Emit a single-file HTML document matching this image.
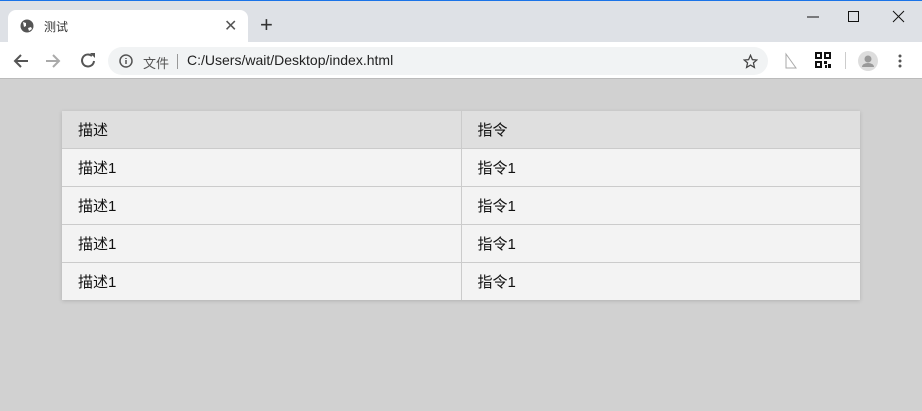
<!DOCTYPE html>
<html><head><meta charset="utf-8"><style>
*{margin:0;padding:0;box-sizing:border-box}
body{width:922px;height:411px;background:#d1d1d1;font-family:"Liberation Sans","Noto Sans CJK SC",sans-serif;position:relative;overflow:hidden}
.top{position:absolute;left:0;top:0;width:922px;height:42px;background:#dee1e6;border-top:1px solid #1a73e8}
.tab{position:absolute;left:8px;top:9px;width:240px;height:34px;background:#fff;border-radius:8px 8px 0 0}
.tab .t{position:absolute;left:36px;top:8px;font-size:12px;color:#333}
.tab .x{position:absolute;left:216px;top:6px;font-size:16px;color:#555}
.plus{position:absolute;left:260px;top:14px;font-size:22px;color:#333;line-height:20px}
.bar{position:absolute;left:0;top:42px;width:922px;height:37px;background:#fff;border-bottom:1px solid #bbb}
.omni{position:absolute;left:108px;top:5px;width:660px;height:28px;background:#f1f3f4;border-radius:14px}
.omni .i{position:absolute;left:35px;top:6px;font-size:13px;color:#555}
.omni .sep{position:absolute;left:69px;top:7px;width:1px;height:15px;background:#999}
.omni .u{position:absolute;left:79px;top:5px;font-size:14px;color:#222}
table{position:absolute;left:62px;top:111px;width:798px;border-collapse:collapse;box-shadow:0 1px 4px rgba(0,0,0,.15)}
td{height:38px;border:1px solid #cbcbcb;padding:0 0 0 16px;font-size:15px;color:#111;background:#f3f3f3;width:399px}
tr:first-child td{background:#dfdfdf;height:37px}
tr:first-child td{border-top:none}
td:first-child{border-left:none}td:last-child{border-right:none}
tr:last-child td{border-bottom:none}
</style></head><body>
<div class="top">
<div class="tab">
<svg style="position:absolute;left:12px;top:9px" width="14" height="14" viewBox="0 0 14 14"><circle cx="7" cy="7" r="6.5" fill="#555"/><path d="M3 3l3 1 0 3-2 1zM8 9l3-1 1 2-3 2z" fill="#fff"/></svg>
<span class="t">测试</span><span class="x">✕</span></div>
<div class="plus">+</div>
<svg style="position:absolute;left:807px;top:9px" width="100" height="14" viewBox="0 0 100 14"><path d="M0 7h12" stroke="#111"/><path d="M41.5 1.5h10v10h-10z" stroke="#111" fill="none"/><path d="M86 1l11 11M97 1L86 12" stroke="#111"/></svg>
</div>
<div class="bar">
<svg style="position:absolute;left:12px;top:10px" width="90" height="18" viewBox="0 0 90 18"><path d="M16 9H3M9 3L3 9l6 6" stroke="#555" stroke-width="2" fill="none"/><path d="M34 9h13M41 3l6 6-6 6" stroke="#aaa" stroke-width="2" fill="none"/><path d="M80 4a6 6 0 1 0 2 5" stroke="#555" stroke-width="2" fill="none"/><path d="M78 1h5v5z" fill="#555"/></svg>
<div class="omni">
<svg style="position:absolute;left:11px;top:7px" width="14" height="14" viewBox="0 0 14 14"><circle cx="7" cy="7" r="6" stroke="#555" stroke-width="1.5" fill="none"/><path d="M7 6v4M7 4v1" stroke="#555" stroke-width="1.5"/></svg>
<span class="i">文件</span><span class="sep"></span><span class="u">C:/Users/wait/Desktop/index.html</span>
<svg style="position:absolute;left:635px;top:7px" width="15" height="15" viewBox="0 0 24 24"><path d="M12 2l3 7 7 .6-5.3 4.6 1.6 7.3L12 17.8 5.7 21.5l1.6-7.3L2 9.6 9 9z" stroke="#444" stroke-width="2" fill="none"/></svg>
</div>
<svg style="position:absolute;left:784px;top:10px" width="18" height="18" viewBox="0 0 18 18"><path d="M2 2l10 14H2z" stroke="#aaa" fill="none"/></svg>
<svg style="position:absolute;left:815px;top:10px" width="16" height="16" viewBox="0 0 16 16"><path d="M0 0h7v7H0zM9 0h7v7H9zM0 9h7v7H0z" fill="#111"/><path d="M2 2h3v3H2zM11 2h3v3h-3zM2 11h3v3H2z" fill="#fff"/><path d="M9 9h3v3H9zM13 12h3v4h-3zM10 13h2v3h-2z" fill="#111"/></svg>
<div style="position:absolute;left:845px;top:10px;width:1px;height:17px;background:#ccc"></div>
<svg style="position:absolute;left:858px;top:9px" width="20" height="20" viewBox="0 0 20 20"><circle cx="10" cy="10" r="10" fill="#ddd"/><circle cx="10" cy="8" r="3.5" fill="#999"/><path d="M4 16a6 4 0 0 1 12 0z" fill="#999"/></svg>
<svg style="position:absolute;left:898px;top:12px" width="4" height="14" viewBox="0 0 4 14"><circle cx="2" cy="2" r="1.5" fill="#555"/><circle cx="2" cy="7" r="1.5" fill="#555"/><circle cx="2" cy="12" r="1.5" fill="#555"/></svg>
</div>
<table>
<tr><td>描述</td><td>指令</td></tr>
<tr><td>描述1</td><td>指令1</td></tr>
<tr><td>描述1</td><td>指令1</td></tr>
<tr><td>描述1</td><td>指令1</td></tr>
<tr><td>描述1</td><td>指令1</td></tr>
</table>
</body></html>
